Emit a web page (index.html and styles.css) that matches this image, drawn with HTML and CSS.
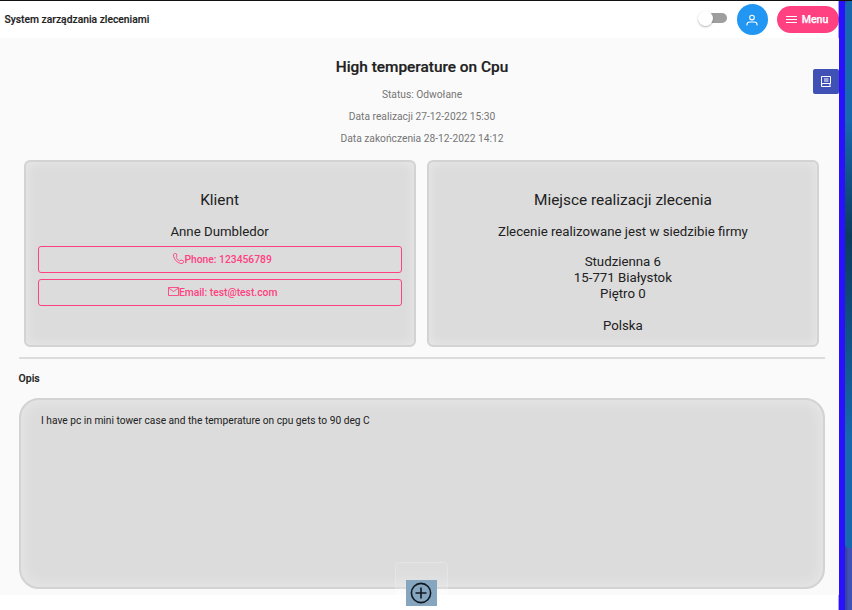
FILE: index.html
```html
<!DOCTYPE html>
<html lang="pl">
<head>
<meta charset="utf-8">
<title>System zarządzania zleceniami</title>
<link rel="stylesheet" href="styles.css">
</head>
<body>
<div class="app">
  <div class="page">
    <header class="topbar">
      <strong class="brand">System zarządzania zleceniami</strong>
      <span class="toggle"><span class="knob"></span></span>
      <button class="user" aria-label="Konto">
        <svg width="12" height="12" viewBox="0 0 12 12" fill="none" stroke="#fff" stroke-width="1.1"><circle cx="6" cy="3.6" r="2.3"/><path d="M1 11.5V10.500Q1 8 3.500 8H8.500Q11 8 11 10.500V11.500"/></svg>
      </button>
      <button class="menu">
        <svg width="11" height="9" viewBox="0 0 11 9" stroke="#fff" stroke-width="1"><path d="M0 1.500H11M0 4.500H11M0 7.500H11"/></svg>
        <span>Menu</span>
      </button>
    </header>
    <main class="content">
      <button class="side" aria-label="Dziennik">
        <svg width="10" height="11" viewBox="0 0 10 11" fill="none" stroke="#fff"><path d="M9.500 7.500V.5H.5V10.500H9.500M9.500 7.500H2Q.5 7.500.5 9M9 7.500V10.500M3 3H7.500M3 5H7.500"/></svg>
      </button>
      <div class="intro">
        <h1>High temperature on Cpu</h1>
        <p>Status: Odwołane</p>
        <p>Data realizacji 27-12-2022 15:30</p>
        <p>Data zakończenia 28-12-2022 14:12</p>
      </div>
      <div class="cards">
        <section class="card">
          <h2>Klient</h2>
          <h3>Anne Dumbledor</h3>
          <a class="contact"><svg width="11" height="11" viewBox="0 0 11 11" fill="none" stroke="currentColor" stroke-width=".9"><path d="M1.200.7Q2.400.1 3.300.8L4 3.100Q3.900 3.700 3 4.300Q4.200 6.900 6.700 8Q7.300 7.100 7.900 7L10.200 7.700Q10.900 8.600 10.300 9.800Q9.500 10.900 7.800 10.500Q2 8.900.5 3.200Q.1 1.500 1.200.7Z"/></svg><span>Phone: 123456789</span></a>
          <a class="contact"><svg width="11" height="11" viewBox="0 0 11 11" fill="none" stroke="currentColor" stroke-width=".9"><path d="M.5 1.500H10.500V9.500H.5ZM.5 2L5.500 5.500L10.500 2"/></svg><span>Email: test@test.com</span></a>
        </section>
        <section class="card">
          <h2>Miejsce realizacji zlecenia</h2>
          <h3>Zlecenie realizowane jest w siedzibie firmy</h3>
          <address>Studzienna 6<br>15-771 Białystok<br>Piętro 0<br><br>Polska</address>
        </section>
      </div>
      <hr>
      <h4>Opis</h4>
      <section class="description">I have pc in mini tower case and the temperature on cpu gets to 90 deg C</section>
    </main>
  </div>
  <div class="rail"></div>
  <div class="track"><div class="thumb"></div></div>
  <div class="dock"><span class="add"><svg width="22" height="22" viewBox="0 0 22 22" fill="none" stroke="#101820" stroke-width="1.600"><circle cx="11" cy="11" r="9.600"/><path d="M11 5.500V16.500M5.500 11H16.500"/></svg></span></div>
</div>
</body>
</html>
```

FILE: styles.css
```css
* { box-sizing: border-box; }
body { margin: 0; background: #fff; color: #212121; font-family: Roboto, "Liberation Sans", sans-serif; overflow: hidden; }
h1, h2, h3, h4, p { margin: 0; }
button { border: 0; padding: 0; font: inherit; color: #fff; display: flex; align-items: center; justify-content: center; }
svg { display: block; flex: none; }
.app { position: relative; display: flex; width: 852px; height: 610px; border-top: 1px solid #111; }
.page { width: 839px; flex: none; }
.topbar { height: 37px; display: flex; align-items: center; padding-left: 4.5px; }
.brand { flex: 1; font-size: 10.3px; font-weight: 500; -webkit-text-stroke: .15px; }
.toggle { position: relative; width: 25px; height: 10px; margin: -3px 10px 0 0; border-radius: 5px; background: #9e9e9e; }
.knob { position: absolute; left: -4px; top: -2px; width: 15px; height: 15px; border-radius: 50%; background: #fff; box-shadow: 0 1px 2px rgba(0,0,0,.3); }
.user { width: 31px; height: 31px; border-radius: 50%; background: #2196f3; margin-right: 9px; }
.user svg { margin: 0 1px 0 0; }
.menu { width: 62px; height: 27px; border-radius: 14px; background: #ff4081; gap: 5px; font-size: 10.6px; font-weight: 500; padding-right: 2px; -webkit-text-stroke: .25px; }
.content { position: relative; height: 557px; background: #fafafa; padding: 18px 14.5px 0 18.5px; }
.side { position: absolute; left: 813px; top: 30.5px; width: 26px; height: 25.5px; border-radius: 2px; background: #3f51b5; }
.intro { text-align: center; padding: .5px 0 0 1px; }
.intro h1 { font-size: 15.4px; line-height: 20px; font-weight: 500; margin-bottom: 7px; -webkit-text-stroke: .2px; }
.intro p { font-size: 10.25px; line-height: 22.4px; color: #757575; }
.cards { display: flex; gap: 11px; margin: 9.500px 5.5px 10px 5px; }
.card { flex: 1; height: 187px; border: 2px solid #d3d3d3; border-radius: 6px; background: #dcdcdc; box-shadow: inset 0 0 12px rgba(255,255,255,.4); padding: 28px 12px 0; text-align: center; }
.card h2 { font-size: 15.4px; line-height: 20px; font-weight: 400; margin-bottom: 14px; }
.card h3, .card address { font-size: 13.25px; line-height: 16px; font-weight: 400; font-style: normal; }
.card address { margin-top: 14px; }
.contact { height: 27px; border: 1px solid #ff4081; border-radius: 3px; display: flex; align-items: center; justify-content: center; color: #ff4081; font-size: 10.3px; font-weight: 500; margin-top: 6px; padding-left: 6px; }
.contact svg { margin-top: -2px; }
hr { margin: 0; height: 2px; border: 0; background: #dcdcdc; }
h4 { margin: 13px 0 12px; font-size: 10.5px; line-height: 14px; font-weight: 500; -webkit-text-stroke: .15px; }
.description { height: 191px; border: 2px solid #d3d3d3; border-radius: 20px; background: #dcdcdc; box-shadow: inset 0 0 16px rgba(255,255,255,.4); padding: 13px 20.5px; font-size: 10.2px; line-height: 16px; }
.rail { width: 6px; background: #2910ff; box-shadow: -1px 0 rgba(41,16,255,.4); }
.track { width: 7px; background: linear-gradient(90deg, #303f8f, #3f51b5 50%); }
.thumb { height: 547px; border-radius: 4px 0 0 4px; background: linear-gradient(#1768ac 0%, #1768ac 22%, #0b3c5d 43%, #1768ac 80%); }
.dock { position: absolute; left: 395px; top: 561px; width: 53px; height: 48px; border: 1px solid rgba(255,255,255,.25); border-bottom: 0; border-radius: 5px 5px 0 0; background: linear-gradient(rgba(255,255,255,.03), rgba(255,255,255,.12) 50%, rgba(255,255,255,.7) 75%, #fff) padding-box; }
.add { display: flex; align-items: center; justify-content: center; width: 31px; height: 26px; margin: 17px 0 0 10px; background: #86a6c0; }
.add svg { margin-right: 1px; }
```
